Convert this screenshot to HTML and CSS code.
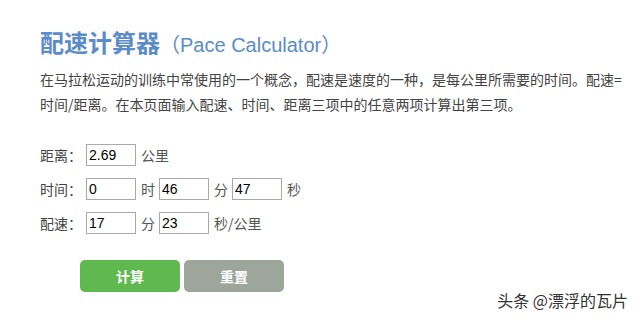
FILE: index.html
```html
<!DOCTYPE html>
<html lang="zh-CN">
<head>
<meta charset="utf-8">
<title>配速计算器</title>
<link rel="stylesheet" href="styles.css">
</head>
<body>
<div class="page">
  <h1 class="title"><span class="title-cn">配速计算器</span><span class="title-en">（Pace Calculator）</span></h1>
  <p class="intro">在马拉松运动的训练中常使用的一个概念，配速是速度的一种，是每公里所需要的时间。配速=时间/距离。在本页面输入配速、时间、距离三项中的任意两项计算出第三项。</p>
  <div class="form">
    <div class="row">
      <span class="label">距离：</span><input class="field" type="text" value="2.69"><span class="unit">公里</span>
    </div>
    <div class="row">
      <span class="label">时间：</span><input class="field" type="text" value="0"><span class="unit">时</span><input class="field" type="text" value="46"><span class="unit">分</span><input class="field" type="text" value="47"><span class="unit">秒</span>
    </div>
    <div class="row">
      <span class="label">配速：</span><input class="field" type="text" value="17"><span class="unit">分</span><input class="field" type="text" value="23"><span class="unit">秒/公里</span>
    </div>
  </div>
  <div class="actions">
    <button class="btn btn-calc" type="button">计算</button>
    <button class="btn btn-reset" type="button">重置</button>
  </div>
</div>
<div class="watermark">头条 @漂浮的瓦片</div>
</body>
</html>
```
FILE: styles.css
```css
html, body {
  margin: 0;
  padding: 0;
  background: #ffffff;
}
body {
  width: 640px;
  height: 323px;
  position: relative;
  overflow: hidden;
  font-family: "Noto Sans CJK SC", "Liberation Sans", sans-serif;
  color: #444444;
}
.page {
  padding: 26px 10px 0 40px;
}
.title {
  margin: 0;
  font-size: 24px;
  line-height: 32px;
  color: #5b8bc8;
  white-space: nowrap;
}
.title-cn {
  font-family: "Noto Sans CJK SC", sans-serif;
  font-weight: bold;
}
.title-en {
  font-family: "Liberation Sans", "Noto Sans CJK SC", sans-serif;
  font-weight: normal;
  font-size: 20px;
}
.intro {
  margin: 6px 0 0 0;
  font-size: 14px;
  line-height: 25px;
  color: #444444;
}
.form {
  margin-top: 21px;
}
.row {
  display: flex;
  align-items: center;
  height: 34px;
  font-size: 14px;
}
.label {
  width: 46px;
  color: #444444;
}
.field {
  box-sizing: border-box;
  width: 50px;
  height: 22px;
  margin: 0;
  padding: 1px 2px;
  border: 1px solid #a9a9a9;
  font-family: "Liberation Sans", sans-serif;
  font-size: 14px;
  color: #000000;
  background: #ffffff;
}
.unit {
  margin: 0 4px 0 5px;
  color: #555555;
}
.actions {
  display: flex;
  gap: 4px;
  margin: 20px 0 0 40px;
}
.btn {
  width: 100px;
  height: 32px;
  border: none;
  border-radius: 5px;
  color: #ffffff;
  font-family: "Noto Sans CJK SC", sans-serif;
  font-size: 14px;
  font-weight: bold;
  padding: 0;
}
.btn-calc {
  background: #60b94e;
}
.btn-reset {
  background: #9ea69c;
}
.watermark {
  position: absolute;
  right: 12px;
  bottom: 11px;
  font-family: "Noto Sans CJK SC", sans-serif;
  font-size: 16px;
  color: #333333;
}
```
